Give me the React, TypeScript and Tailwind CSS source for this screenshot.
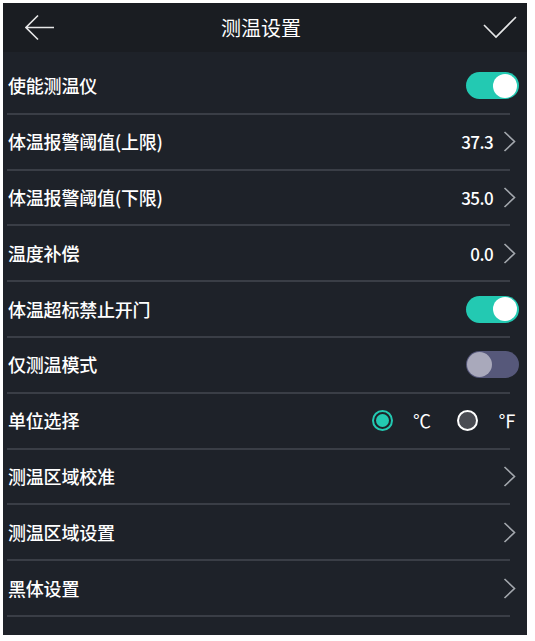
const font = { fontFamily: '"Noto Sans CJK SC", "Noto Sans", sans-serif' }

const Chevron = () => (
  <svg width="13" height="21" viewBox="0 0 13 21" fill="none">
    <path d="M1.5 1 L11.5 10.5 L1.5 20" stroke="#a3a7ad" strokeWidth="1.6" />
  </svg>
)

const Toggle = ({ on }: { on: boolean }) =>
  on ? (
    <div className="w-[53px] h-[27px] rounded-full bg-[#23c9b2] flex items-center justify-end pr-[2px]">
      <div className="w-[24px] h-[24px] rounded-full bg-white" />
    </div>
  ) : (
    <div className="w-[53px] h-[27px] rounded-full bg-[#56587a] flex items-center pl-[1px]">
      <div className="w-[25px] h-[25px] rounded-full bg-[#a9a9bb]" />
    </div>
  )

const Divider = () => <div className="h-[2px] ml-[4px] mr-[17px] bg-[#3a3e46]" />

interface RowProps {
  label: string
  children?: React.ReactNode
}

const Row = ({ label, children }: RowProps) => (
  <>
    <div className="flex items-center justify-between h-[53.8px] pl-[5px] pr-[8px]">
      <span className="text-[18px] text-white font-medium tracking-[-0.2px]">{label}</span>
      {children}
    </div>
    <Divider />
  </>
)

const Value = ({ v }: { v?: string }) => (
  <div className="flex items-center gap-[10px] pr-[3px]">
    {v && <span className="text-[17px] text-white font-medium tracking-[-0.6px]">{v}</span>}
    <Chevron />
  </div>
)

export default function App() {
  return (
    <div className="w-[535px] h-[641px] bg-white pt-[3px] pl-[3px]" style={font}>
      <div className="w-[524px] h-[632px] bg-[#1e2229] flex flex-col">
        <div className="h-[49px] bg-[#1a1d22] flex items-center pl-[22px] pr-[10px]">
          <div className="flex-1 flex">
            <svg width="30" height="27" viewBox="0 0 30 27" fill="none">
              <path d="M1 13.5 H29 M13 1.5 L1 13.5 L13 25.5" stroke="#e6e7e8" strokeWidth="1.6" />
            </svg>
          </div>
          <span className="text-[20px] text-white mr-[20px]">测温设置</span>
          <div className="flex-1 flex justify-end">
            <svg width="34" height="23" viewBox="0 0 34 23" fill="none">
              <path d="M1 9 L13 21 L33 1" stroke="#e6e7e8" strokeWidth="1.6" />
            </svg>
          </div>
        </div>
        <div className="pt-[7px]">
          <Row label="使能测温仪">
            <Toggle on />
          </Row>
          <Row label="体温报警阈值(上限)">
            <Value v="37.3" />
          </Row>
          <Row label="体温报警阈值(下限)">
            <Value v="35.0" />
          </Row>
          <Row label="温度补偿">
            <Value v="0.0" />
          </Row>
          <Row label="体温超标禁止开门">
            <Toggle on />
          </Row>
          <Row label="仅测温模式">
            <Toggle on={false} />
          </Row>
          <Row label="单位选择">
            <div className="flex items-center pr-[4px]">
              <div className="w-[21px] h-[21px] rounded-full border-2 border-[#23c9b2] flex items-center justify-center">
                <div className="w-[13px] h-[13px] rounded-full bg-[#23c9b2]" />
              </div>
              <span className="ml-[20px] text-[18px] text-white tracking-[-1px]">℃</span>
              <div className="ml-[27px] w-[21px] h-[21px] rounded-full border-2 border-white bg-[#4a4c53]" />
              <span className="ml-[20px] text-[18px] text-white tracking-[-1px]">℉</span>
            </div>
          </Row>
          <Row label="测温区域校准">
            <Value />
          </Row>
          <Row label="测温区域设置">
            <Value />
          </Row>
          <Row label="黑体设置">
            <Value />
          </Row>
        </div>
      </div>
    </div>
  )
}
